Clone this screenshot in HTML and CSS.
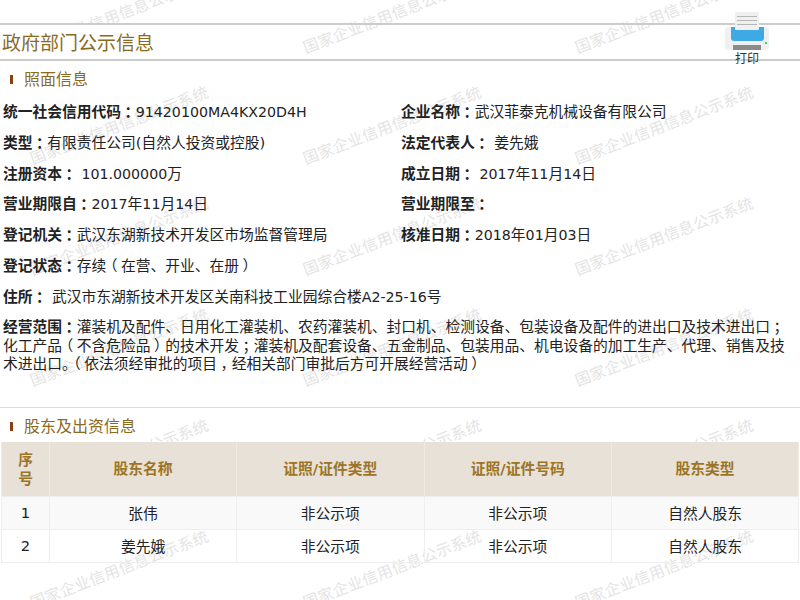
FILE: index.html
```html
<!DOCTYPE html>
<html lang="zh-CN">
<head>
<meta charset="utf-8">
<title>政府部门公示信息</title>
<link rel="stylesheet" href="styles.css">
</head>
<body>
<div class="watermarks" aria-hidden="true">
  <span class="wm">国家企业信用信息公示系统</span><span class="wm">国家企业信用信息公示系统</span><span class="wm">国家企业信用信息公示系统</span>
  <span class="wm">国家企业信用信息公示系统</span><span class="wm">国家企业信用信息公示系统</span><span class="wm">国家企业信用信息公示系统</span>
  <span class="wm">国家企业信用信息公示系统</span><span class="wm">国家企业信用信息公示系统</span><span class="wm">国家企业信用信息公示系统</span>
  <span class="wm">国家企业信用信息公示系统</span><span class="wm">国家企业信用信息公示系统</span><span class="wm">国家企业信用信息公示系统</span>
  <span class="wm">国家企业信用信息公示系统</span><span class="wm">国家企业信用信息公示系统</span><span class="wm">国家企业信用信息公示系统</span>
  <span class="wm">国家企业信用信息公示系统</span><span class="wm">国家企业信用信息公示系统</span><span class="wm">国家企业信用信息公示系统</span>
</div>
<main class="page">
  <header class="title-bar">
    <h1 class="title">政府部门公示信息</h1>
    <div class="print">
      <svg class="print-icon" viewBox="0 0 44 38" width="44" height="38">
        <rect x="0" y="15" width="44" height="23" rx="3" fill="#eef0f1"/>
        <path d="M6 15h33v11a3 3 0 0 1-3 3H9a3 3 0 0 1-3-3z" fill="#3fa9e6"/>
        <rect x="10" y="0" width="24" height="18" rx="1" fill="#f0f0ee"/>
        <path d="M12 4.5h20M12 8.5h20M12 12.5h20" stroke="#b5b5b3" stroke-width="1.2"/>
        <rect x="8" y="33" width="28" height="5" fill="#8b8b8b"/>
        <rect x="40" y="30" width="2" height="2" fill="#4fd04f"/>
      </svg>
      <span class="print-label">打印</span>
    </div>
  </header>
  <h2 class="section-head">照面信息</h2>
  <div class="info-grid">
    <p><b>统一社会信用代码<span class="pr">：</span></b><span class="num">91420100MA4KX20D4H</span></p>
    <p><b>企业名称<span class="pr">：</span></b>武汉菲泰克机械设备有限公司</p>
    <p><b>类型<span class="pr">：</span></b>有限责任公司(自然人投资或控股)</p>
    <p><b>法定代表人<span class="pr">：</span></b> 姜先娥</p>
    <p><b>注册资本<span class="pr">：</span></b> <span class="num">101.000000</span>万</p>
    <p><b>成立日期<span class="pr">：</span></b> <span class="num">2017</span>年<span class="num">11</span>月<span class="num">14</span>日</p>
    <p><b>营业期限自<span class="pr">：</span></b><span class="num">2017</span>年<span class="num">11</span>月<span class="num">14</span>日</p>
    <p><b>营业期限至<span class="pr">：</span></b></p>
    <p><b>登记机关<span class="pr">：</span></b>武汉东湖新技术开发区市场监督管理局</p>
    <p><b>核准日期<span class="pr">：</span></b><span class="num">2018</span>年<span class="num">01</span>月<span class="num">03</span>日</p>
    <p class="wide"><b>登记状态<span class="pr">：</span></b>存续<span class="pl">（</span>在营、开业、在册<span class="pr">）</span></p>
    <p class="wide"><b>住所<span class="pr">：</span></b> 武汉市东湖新技术开发区关南科技工业园综合楼<span class="num">A2-25-16</span>号</p>
    <p class="wide scope"><b>经营范围<span class="pr">：</span></b>灌装机及配件、日用化工灌装机、农药灌装机、封口机、检测设备、包装设备及配件的进出口及技术进出口<span class="pr">；</span>化工产品<span class="pl">（</span>不含危险品<span class="pr">）</span>的技术开发<span class="pr">；</span>灌装机及配套设备、五金制品、包装用品、机电设备的加工生产、代理、销售及技术进出口。<span class="pl">（</span>依法须经审批的项目<span class="pr">，</span>经相关部门审批后方可开展经营活动<span class="pr">）</span></p>
  </div>
  <section class="holders">
    <h2 class="section-head">股东及出资信息</h2>
    <table class="table">
      <thead>
        <tr><th class="c-no">序号</th><th class="c-name">股东名称</th><th class="c-type">证照/证件类型</th><th class="c-type">证照/证件号码</th><th>股东类型</th></tr>
      </thead>
      <tbody>
        <tr class="odd"><td>1</td><td>张伟</td><td>非公示项</td><td>非公示项</td><td>自然人股东</td></tr>
        <tr><td>2</td><td>姜先娥</td><td>非公示项</td><td>非公示项</td><td>自然人股东</td></tr>
      </tbody>
    </table>
  </section>
</main>
</body>
</html>
```
FILE: styles.css
```css
* { box-sizing: border-box; }
html, body { margin: 0; padding: 0; }
body {
  width: 800px;
  height: 600px;
  overflow: hidden;
  position: relative;
  background: #fff;
  color: #222;
  font-family: "DejaVu Sans", "Noto Sans CJK SC", sans-serif;
  font-size: 14.75px;
}
.watermarks {
  position: absolute;
  left: 24px;
  top: -22px;
  display: grid;
  grid-template-columns: repeat(3, 190px);
  column-gap: 82.5px;
  grid-auto-rows: 111px;
}
.wm {
  width: 190px;
  height: 70px;
  display: flex;
  align-items: center;
  white-space: nowrap;
  transform: rotate(-21deg);
  color: #e4e4e4;
  font-size: 15.5px;
  letter-spacing: .3px;
}
.page { position: relative; padding-top: 23px; }
.title-bar {
  height: 38px;
  border-top: 2px solid #ccc;
  border-bottom: 2px solid #ccc;
  display: flex;
  align-items: center;
  justify-content: space-between;
}
.title {
  margin: 0;
  padding: 0 2px;
  width: 157px;
  height: 34px;
  line-height: 36px;
  background: #fff;
  font-size: 19px;
  font-weight: 400;
  color: #8b6a1f;
  white-space: nowrap;
}
.print {
  position: absolute;
  left: 725px;
  top: 12px;
  width: 44px;
  display: flex;
  flex-direction: column;
  align-items: center;
}
.print-icon { display: block; }
.print-label { margin-top: 2px; font-size: 12px; line-height: 14px; color: #333; }
.section-head {
  margin: 0;
  padding-left: 24px;
  height: 36px;
  line-height: 37px;
  font-size: 16px;
  font-weight: 400;
  color: #8b6a1f;
  position: relative;
}
.section-head::before {
  content: "";
  position: absolute;
  left: 10px;
  top: 14px;
  width: 3px;
  height: 9px;
  background: #8a3f10;
}
.info-grid {
  display: grid;
  grid-template-columns: 398px 1fr;
  padding-left: 3px;
}
.info-grid p { margin: 0; height: 30.8px; line-height: 29px; white-space: nowrap; }
.info-grid b { font-weight: 700; }
.info-grid .wide { grid-column: 1 / -1; }
.info-grid .scope { height: auto; white-space: normal; line-height: 18.7px; padding: 5.5px 5px 0 0; }
.num { font-size: 14.2px; }
.pr { margin-left: 3.5px; margin-right: -3.5px; }
.pl { margin-left: -3.5px; margin-right: 3.5px; }
.holders {
  margin-top: 32.5px;
  border-top: 1px solid #ddd;
}
.holders .section-head { height: 34px; }
.table {
  width: 798px;
  margin-left: 1px;
  border-collapse: collapse;
  table-layout: fixed;
  text-align: center;
}
.table th {
  height: 55px;
  background: #e8e1d7;
  color: #9c7426;
  font-weight: 700;
  padding: 0 10px;
  line-height: 19px;
  border: 1px solid #efeae3;
  border-top: 0;
  border-bottom: 0;
}
.table td {
  height: 33px;
  padding: 0 0 2px;
  border: 1px solid #eee;
}
.odd td { background: #f9f9f9; }
.c-no { width: 48px; }
.c-name { width: 187px; }
.c-type { width: 187.5px; }
```
